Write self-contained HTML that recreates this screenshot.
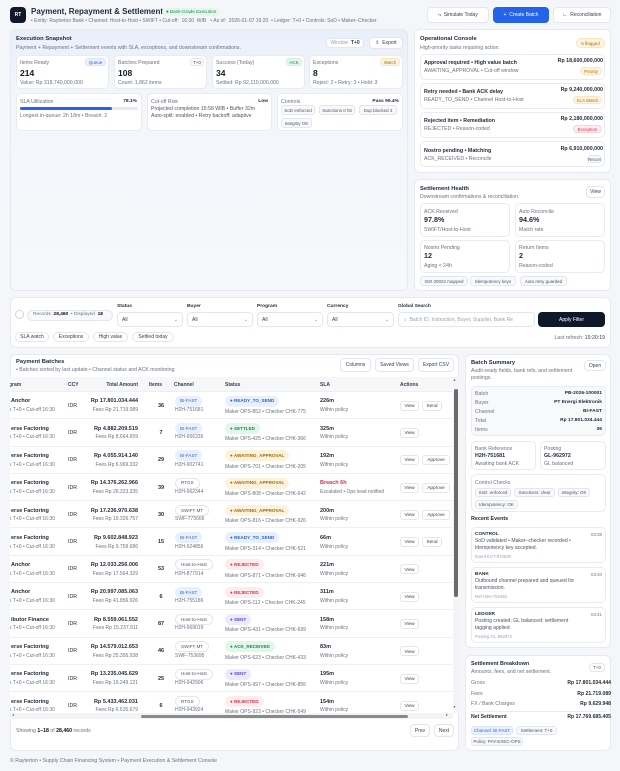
<!DOCTYPE html>
<html><head><meta charset="utf-8"><style>
*{box-sizing:border-box;margin:0;padding:0}
body{width:620px;height:771px;overflow:hidden;background:#f4f6f9;font-family:"Liberation Sans",sans-serif;color:#1f2937;position:relative;font-size:5.2px}
.a{position:absolute;white-space:nowrap;line-height:1.2}
.p{position:absolute;background:#fff;border:1px solid #e6e9ef;border-radius:6px}
.c{position:absolute;background:#fff;border:1px solid #e8ebf0;border-radius:5px}
.h{font-weight:bold;font-size:5.8px;color:#1e293b}
.s{color:#6b7280;font-size:5.2px}
.btn{position:absolute;background:#fff;border:1px solid #e3e6ec;border-radius:4px;font-size:5px;color:#374151;display:flex;align-items:center;justify-content:center}
.tag{position:absolute;border:1px solid #e3e6ec;background:#f8f9fb;border-radius:3px;font-size:4.5px;color:#4b5563;display:flex;align-items:center;justify-content:center;height:10px}
.v{font-weight:bold;font-size:8.5px;color:#111827}
.r{position:absolute;left:0;width:443px;height:27.3px;border-bottom:1px solid #eef0f3;background:#fff}
.pb{font-weight:bold;font-size:5.5px;color:#1f2937}
.ps{font-size:5px;color:#6b7280}
.ch{position:absolute;height:11px;border-radius:6px;font-size:4.6px;padding:0 5px;display:flex;align-items:center;white-space:nowrap}
.bf{background:#e9f0fd;color:#3b66c9}
.gy{background:#fff;border:1px solid #e3e6ec;color:#4b5563}
.st{position:absolute;height:11px;border-radius:6px;font-size:4.6px;padding:0 5px;display:flex;align-items:center;white-space:nowrap;font-weight:bold}
.rd{background:#e8f0fe;color:#2f5fd0}.se{background:#e3f6ec;color:#16894f}.aw{background:#fdf3dc;color:#a5690c}.rj{background:#fdecee;color:#d0344a}.sn{background:#eeeafd;color:#5b46d6}
.bt{position:absolute;height:10px;top:8.7px;background:#fff;border:1px solid #e3e6ec;border-radius:3px;font-size:4.7px;color:#374151;display:flex;align-items:center;justify-content:center}
</style></head><body>

<!-- header -->
<div class="a" style="left:10px;top:7px;width:16px;height:16px;background:#111827;border-radius:4px;color:#fff;font-size:5px;font-weight:bold;display:flex;align-items:center;justify-content:center">RT</div>
<div class="a" style="left:31px;top:6.5px;font-size:8px;font-weight:bold;color:#1e293b">Payment, Repayment &amp; Settlement</div>
<div class="a" style="left:162px;top:7.5px;height:8px;padding:0 4px;background:#e6f6ed;color:#16894f;border-radius:4px;font-size:4.6px;display:flex;align-items:center">● Bank-Grade Execution</div>
<div class="a s" style="left:31px;top:17.5px;font-size:5px">• Entity: Rayterton Bank • Channel: Host-to-Host • SWIFT • Cut-off: &nbsp;16:30 &nbsp;WIB &nbsp; • As of: &nbsp;2026-01-07 19:20 &nbsp;• Ledger: T+0 • Controls: SoD • Maker–Checker</div>
<div class="btn" style="left:427px;top:7px;width:62px;height:16px">⤷ &nbsp;Simulate Today</div>
<div class="btn" style="left:493px;top:7px;width:56px;height:16px;background:#2563eb;border-color:#2563eb;color:#fff">+ &nbsp;Create Batch</div>
<div class="btn" style="left:553px;top:7px;width:58px;height:16px">∟ &nbsp;Reconciliation</div>

<!-- exec snapshot -->
<div class="p" style="left:10px;top:29px;width:398px;height:262px;background:linear-gradient(180deg,#e9effa 0%,#f3f6fb 25%,#f6f8fb 100%)"></div>
<div class="a h" style="left:16px;top:36px">Execution Snapshot</div>
<div class="a s" style="left:16px;top:44.5px">Payment + Repayment + Settlement events with SLA, exceptions, and downstream confirmations.</div>
<div class="btn" style="left:326px;top:38px;width:38px;height:10px;color:#9ca3af">Window &nbsp;<b style="color:#374151">T+0</b></div>
<div class="btn" style="left:369px;top:37px;width:34px;height:12px">⇪ &nbsp;Export</div>

<div class="c" style="left:16px;top:55px;width:93px;height:34px"></div>
<div class="a s" style="left:20px;top:60px">Items Ready</div>
<div class="tag" style="left:85px;top:58px;width:21px;height:8px;background:#e9f0fd;color:#3b66c9;border-color:#dbe5fb">Queue</div>
<div class="a v" style="left:20px;top:68px">214</div>
<div class="a s" style="left:20px;top:79.5px">Value: Rp 318,740,000,000</div>

<div class="c" style="left:114px;top:55px;width:93px;height:34px"></div>
<div class="a s" style="left:118px;top:60px">Batches Prepared</div>
<div class="tag" style="left:190px;top:58px;width:14px;height:8px">T+0</div>
<div class="a v" style="left:118px;top:68px">108</div>
<div class="a s" style="left:118px;top:79.5px">Count: 1,862 items</div>

<div class="c" style="left:212px;top:55px;width:93px;height:34px"></div>
<div class="a s" style="left:216px;top:60px">Success (Today)</div>
<div class="tag" style="left:286px;top:58px;width:16px;height:8px;background:#e6f6ed;color:#16894f;border-color:#d2efdf">ACK</div>
<div class="a v" style="left:216px;top:68px">34</div>
<div class="a s" style="left:216px;top:79.5px">Settled: Rp 92,110,000,000</div>

<div class="c" style="left:309px;top:55px;width:94px;height:34px"></div>
<div class="a s" style="left:313px;top:60px">Exceptions</div>
<div class="tag" style="left:380px;top:58px;width:20px;height:8px;background:#fdf4de;color:#b07012;border-color:#f8e7bd">Watch</div>
<div class="a v" style="left:313px;top:68px">8</div>
<div class="a s" style="left:313px;top:79.5px">Reject: 2 • Retry: 3 • Hold: 3</div>

<div class="c" style="left:16px;top:93px;width:126px;height:38px"></div>
<div class="a s" style="left:20px;top:98.5px">SLA Utilization</div>
<div class="a" style="right:483px;top:98.5px;font-weight:bold;font-size:4.9px">78.1%</div>
<div class="a" style="left:20px;top:106.5px;width:118px;height:3.5px;background:#e5e9f0;border-radius:2px"><div style="width:78%;height:100%;background:#2563eb;border-radius:2px"></div></div>
<div class="a s" style="left:20px;top:112.5px">Longest in-queue: 2h 18m • Breach: 2</div>

<div class="c" style="left:147px;top:93px;width:125px;height:38px"></div>
<div class="a s" style="left:151px;top:98.5px">Cut-off Risk</div>
<div class="a" style="right:352px;top:98.5px;font-weight:bold;font-size:4.9px">Low</div>
<div class="a s" style="left:151px;top:106px;color:#4b5563">Projected completion 15:58 WIB • Buffer 32m</div>
<div class="a s" style="left:151px;top:113px;color:#4b5563">Auto-split: enabled • Retry backoff: adaptive</div>

<div class="c" style="left:277px;top:93px;width:126px;height:38px"></div>
<div class="a s" style="left:281px;top:98.5px">Controls</div>
<div class="a" style="right:221px;top:98.5px;font-weight:bold;font-size:4.9px">Pass 99.4%</div>
<div class="tag" style="left:281px;top:105px;width:34px">SoD enforced</div>
<div class="tag" style="left:319px;top:105px;width:36px">Sanctions 0 hit</div>
<div class="tag" style="left:359px;top:105px;width:38px">Dup blocked 4</div>
<div class="tag" style="left:281px;top:118px;width:31px">Integrity OK</div>

<!-- ops console -->
<div class="p" style="left:414px;top:29px;width:197px;height:144px"></div>
<div class="a h" style="left:420px;top:36px">Operational Console</div>
<div class="a s" style="left:420px;top:44.5px">High-priority tasks requiring action.</div>
<div class="tag" style="left:576px;top:38px;width:29px;height:10px;background:#fdf4de;color:#b07012;border-color:#f8e7bd;border-radius:5px">5 flagged</div>

<div class="c" style="left:420px;top:54px;width:185px;height:26px"></div>
<div class="a" style="left:424px;top:59.5px;font-weight:bold;font-size:5.3px">Approval required • High value batch</div>
<div class="a s" style="left:424px;top:68px">AWAITING_APPROVAL • Cut-off window</div>
<div class="a" style="right:17px;top:58px;font-weight:bold;font-size:5.3px">Rp 18,600,000,000</div>
<div class="tag" style="left:580px;top:67px;width:22px;height:8px;background:#fdf4de;color:#b07012;border-color:#f8e7bd;border-radius:4px">Priority</div>

<div class="c" style="left:420px;top:83px;width:185px;height:26px"></div>
<div class="a" style="left:424px;top:88.5px;font-weight:bold;font-size:5.3px">Retry needed • Bank ACK delay</div>
<div class="a s" style="left:424px;top:97px">READY_TO_SEND • Channel Host-to-Host</div>
<div class="a" style="right:17px;top:87px;font-weight:bold;font-size:5.3px">Rp 9,240,000,000</div>
<div class="tag" style="left:573px;top:96px;width:29px;height:8px;background:#fdf4de;color:#b07012;border-color:#f8e7bd;border-radius:4px">SLA Watch</div>

<div class="c" style="left:420px;top:112px;width:185px;height:26px"></div>
<div class="a" style="left:424px;top:117.5px;font-weight:bold;font-size:5.3px">Rejected item • Remediation</div>
<div class="a s" style="left:424px;top:126px">REJECTED • Reason-coded</div>
<div class="a" style="right:17px;top:116px;font-weight:bold;font-size:5.3px">Rp 2,180,000,000</div>
<div class="tag" style="left:573px;top:125px;width:29px;height:8px;background:#fdecee;color:#d0344a;border-color:#f8d6db;border-radius:4px">Exception</div>

<div class="c" style="left:420px;top:141px;width:185px;height:26px"></div>
<div class="a" style="left:424px;top:147.5px;font-weight:bold;font-size:5.3px">Nostro pending • Matching</div>
<div class="a s" style="left:424px;top:155.5px">ACK_RECEIVED • Reconcile</div>
<div class="a" style="right:17px;top:146px;font-weight:bold;font-size:5.3px">Rp 6,910,000,000</div>
<div class="tag" style="left:587px;top:155px;width:15px;height:8px;border-radius:4px">Recon</div>

<!-- settlement health -->
<div class="p" style="left:414px;top:179px;width:197px;height:112px"></div>
<div class="a h" style="left:420px;top:186px">Settlement Health</div>
<div class="a s" style="left:420px;top:194px">Downstream confirmations &amp; reconciliation.</div>
<div class="btn" style="left:586px;top:186px;width:19px;height:12px">View</div>
<div class="c" style="left:420px;top:203px;width:90px;height:34px"></div>
<div class="a s" style="left:424px;top:208.5px">ACK Received</div>
<div class="a" style="left:424px;top:215.5px;font-weight:bold;font-size:7.2px">97.8%</div>
<div class="a s" style="left:424px;top:226.5px">SWIFT/Host-to-Host</div>
<div class="c" style="left:515px;top:203px;width:90px;height:34px"></div>
<div class="a s" style="left:519px;top:208.5px">Auto Reconcile</div>
<div class="a" style="left:519px;top:215.5px;font-weight:bold;font-size:7.2px">94.6%</div>
<div class="a s" style="left:519px;top:226.5px">Match rate</div>
<div class="c" style="left:420px;top:240px;width:90px;height:33px"></div>
<div class="a s" style="left:424px;top:245px">Nostro Pending</div>
<div class="a" style="left:424px;top:252px;font-weight:bold;font-size:7.2px">12</div>
<div class="a s" style="left:424px;top:262.5px">Aging &lt; 24h</div>
<div class="c" style="left:515px;top:240px;width:90px;height:33px"></div>
<div class="a s" style="left:519px;top:245px">Return Items</div>
<div class="a" style="left:519px;top:252px;font-weight:bold;font-size:7.2px">2</div>
<div class="a s" style="left:519px;top:262.5px">Reason-coded</div>
<div class="tag" style="left:420px;top:276px;width:48px">ISO 20022 mapped</div>
<div class="tag" style="left:470px;top:276px;width:46px">Idempotency keys</div>
<div class="tag" style="left:520px;top:276px;width:47px">Auto retry guarded</div>

<!-- filter -->
<div class="p" style="left:10px;top:297px;width:601px;height:51px"></div>
<div class="a" style="left:15px;top:310px;width:9px;height:9px;border:1px solid #d1d5db;border-radius:50%;background:#fff"></div>
<div class="a" style="left:27px;top:309.5px;width:86px;height:11px;border:1px solid #e3e6ec;border-radius:6px;background:#f8f9fb;font-size:4.8px;color:#6b7280;display:flex;align-items:center;padding-left:5px">Records &nbsp;<b style="color:#111">28,460</b>&nbsp; • Displayed &nbsp;<b style="color:#111">18</b></div>
<div class="a" style="left:117px;top:303.5px;font-weight:bold;font-size:4.9px">Status</div>
<div class="a" style="left:187px;top:303.5px;font-weight:bold;font-size:4.9px">Buyer</div>
<div class="a" style="left:257px;top:303.5px;font-weight:bold;font-size:4.9px">Program</div>
<div class="a" style="left:327px;top:303.5px;font-weight:bold;font-size:4.9px">Currency</div>
<div class="a" style="left:398px;top:303.5px;font-weight:bold;font-size:4.9px">Global Search</div>
<div class="btn" style="left:117px;top:312px;width:66px;height:15px;justify-content:space-between;padding:0 4px"><span>All</span><span style="color:#888">⌄</span></div>
<div class="btn" style="left:187px;top:312px;width:66px;height:15px;justify-content:space-between;padding:0 4px"><span>All</span><span style="color:#888">⌄</span></div>
<div class="btn" style="left:257px;top:312px;width:66px;height:15px;justify-content:space-between;padding:0 4px"><span>All</span><span style="color:#888">⌄</span></div>
<div class="btn" style="left:327px;top:312px;width:67px;height:15px;justify-content:space-between;padding:0 4px"><span>All</span><span style="color:#888">⌄</span></div>
<div class="btn" style="left:398px;top:312px;width:137px;height:15px;justify-content:flex-start;padding:0 5px;color:#9ca3af;overflow:hidden">⌕ &nbsp;Batch ID, Instruction, Buyer, Supplier, Bank Re</div>
<div class="btn" style="left:538px;top:312px;width:67px;height:15px;background:#0f172a;border-color:#0f172a;color:#fff">Apply Filter</div>
<div class="btn" style="left:15px;top:332px;width:34px;height:10px;border-radius:5px">SLA watch</div>
<div class="btn" style="left:53px;top:332px;width:36px;height:10px;border-radius:5px">Exceptions</div>
<div class="btn" style="left:93px;top:332px;width:35px;height:10px;border-radius:5px">High value</div>
<div class="btn" style="left:132px;top:332px;width:42px;height:10px;border-radius:5px">Settled today</div>
<div class="a s" style="right:15px;top:334.5px">Last refresh: <span style="color:#374151">19:20:19</span></div>

<!-- payment batches -->
<div class="p" style="left:10px;top:354px;width:449px;height:397px"></div>
<div class="a h" style="left:16px;top:359px">Payment Batches</div>
<div class="a s" style="left:16px;top:366.5px">• Batches sorted by last update • Channel status and ACK monitoring</div>
<div class="btn" style="left:340px;top:358px;width:31px;height:14px">Columns</div>
<div class="btn" style="left:375px;top:358px;width:39px;height:14px">Saved Views</div>
<div class="btn" style="left:418px;top:358px;width:36px;height:14px">Export CSV</div>

<div class="a" style="left:10px;top:377px;width:449px;height:336px;overflow:hidden">
<div class="a" style="left:0;top:0;width:443px;height:15px;background:#f6f7f9;border-bottom:1px solid #eceef2"></div>
<div class="a" style="left:-1px;top:4.5px;font-weight:bold;font-size:5px;color:#374151">gram</div>
<div class="a" style="left:58px;top:4.5px;font-weight:bold;font-size:5px;color:#374151">CCY</div>
<div class="a" style="right:321px;top:4.5px;font-weight:bold;font-size:5px;color:#374151">Total Amount</div>
<div class="a" style="left:139px;top:4.5px;font-weight:bold;font-size:5px;color:#374151">Items</div>
<div class="a" style="left:164px;top:4.5px;font-weight:bold;font-size:5px;color:#374151">Channel</div>
<div class="a" style="left:215px;top:4.5px;font-weight:bold;font-size:5px;color:#374151">Status</div>
<div class="a" style="left:310px;top:4.5px;font-weight:bold;font-size:5px;color:#374151">SLA</div>
<div class="a" style="left:390px;top:4.5px;font-weight:bold;font-size:5px;color:#374151">Actions</div>

<div class="r" style="top:15px"><div class="a pb" style="left:1px;top:6.4px">Anchor</div><div class="a ps" style="left:-1px;top:15px">s T+0 • Cut-off 16:30</div><div class="a" style="left:58px;top:10.7px">IDR</div><div class="a pb" style="right:315px;top:6.4px">Rp 17.801.034.444</div><div class="a ps" style="right:315px;top:15px">Fees Rp 21.719.089</div><div class="a pb" style="left:146px;width:10px;text-align:center;top:10.7px">36</div><span class="ch bf" style="left:165px;top:3.7px">BI-FAST</span><div class="a ps" style="left:165px;top:15px">H2H-751681</div><span class="st rd" style="left:215px;top:3.7px">● READY_TO_SEND</span><div class="a ps" style="left:215px;top:17px">Maker OPS-852 • Checker CHK-775</div><div class="a pb" style="left:310px;top:6.4px">226m</div><div class="a ps" style="left:310px;top:15px">Within policy</div><span class="bt" style="left:390px;width:19px">View</span><span class="bt" style="left:412px;width:20px">Send</span></div>

<div class="r" style="top:42.3px"><div class="a pb" style="left:1px;top:6.4px">erse Factoring</div><div class="a ps" style="left:-1px;top:15px">s T+0 • Cut-off 16:30</div><div class="a" style="left:58px;top:10.7px">IDR</div><div class="a pb" style="right:315px;top:6.4px">Rp 4.882.209.519</div><div class="a ps" style="right:315px;top:15px">Fees Rp 8.664.659</div><div class="a pb" style="left:146px;width:10px;text-align:center;top:10.7px">7</div><span class="ch bf" style="left:165px;top:3.7px">BI-FAST</span><div class="a ps" style="left:165px;top:15px">H2H-956336</div><span class="st se" style="left:215px;top:3.7px">● SETTLED</span><div class="a ps" style="left:215px;top:17px">Maker OPS-425 • Checker CHK-366</div><div class="a pb" style="left:310px;top:6.4px">325m</div><div class="a ps" style="left:310px;top:15px">Within policy</div><span class="bt" style="left:390px;width:19px">View</span></div>

<div class="r" style="top:69.6px"><div class="a pb" style="left:1px;top:6.4px">erse Factoring</div><div class="a ps" style="left:-1px;top:15px">s T+0 • Cut-off 16:30</div><div class="a" style="left:58px;top:10.7px">IDR</div><div class="a pb" style="right:315px;top:6.4px">Rp 4.055.914.140</div><div class="a ps" style="right:315px;top:15px">Fees Rp 6.969.332</div><div class="a pb" style="left:146px;width:10px;text-align:center;top:10.7px">29</div><span class="ch bf" style="left:165px;top:3.7px">BI-FAST</span><div class="a ps" style="left:165px;top:15px">H2H-902741</div><span class="st aw" style="left:215px;top:3.7px">● AWAITING_APPROVAL</span><div class="a ps" style="left:215px;top:17px">Maker OPS-701 • Checker CHK-205</div><div class="a pb" style="left:310px;top:6.4px">192m</div><div class="a ps" style="left:310px;top:15px">Within policy</div><span class="bt" style="left:390px;width:19px">View</span><span class="bt" style="left:412px;width:28px">Approve</span></div>

<div class="r" style="top:96.9px"><div class="a pb" style="left:1px;top:6.4px">erse Factoring</div><div class="a ps" style="left:-1px;top:15px">s T+0 • Cut-off 16:30</div><div class="a" style="left:58px;top:10.7px">IDR</div><div class="a pb" style="right:315px;top:6.4px">Rp 14.376.262.966</div><div class="a ps" style="right:315px;top:15px">Fees Rp 26.323.335</div><div class="a pb" style="left:146px;width:10px;text-align:center;top:10.7px">39</div><span class="ch gy" style="left:165px;top:3.7px">RTGS</span><div class="a ps" style="left:165px;top:15px">H2H-962344</div><span class="st aw" style="left:215px;top:3.7px">● AWAITING_APPROVAL</span><div class="a ps" style="left:215px;top:17px">Maker OPS-808 • Checker CHK-642</div><div class="a pb" style="left:310px;top:6.4px;color:#d0344a">Breach 6h</div><div class="a ps" style="left:310px;top:15px">Escalated • Ops lead notified</div><span class="bt" style="left:390px;width:19px">View</span><span class="bt" style="left:412px;width:28px">Approve</span></div>

<div class="r" style="top:124.2px"><div class="a pb" style="left:1px;top:6.4px">erse Factoring</div><div class="a ps" style="left:-1px;top:15px">s T+0 • Cut-off 16:30</div><div class="a" style="left:58px;top:10.7px">IDR</div><div class="a pb" style="right:315px;top:6.4px">Rp 17.236.970.638</div><div class="a ps" style="right:315px;top:15px">Fees Rp 19.326.757</div><div class="a pb" style="left:146px;width:10px;text-align:center;top:10.7px">30</div><span class="ch gy" style="left:165px;top:3.7px">SWIFT MT</span><div class="a ps" style="left:165px;top:15px">SWF-775666</div><span class="st aw" style="left:215px;top:3.7px">● AWAITING_APPROVAL</span><div class="a ps" style="left:215px;top:17px">Maker OPS-816 • Checker CHK-926</div><div class="a pb" style="left:310px;top:6.4px">200m</div><div class="a ps" style="left:310px;top:15px">Within policy</div><span class="bt" style="left:390px;width:19px">View</span><span class="bt" style="left:412px;width:28px">Approve</span></div>

<div class="r" style="top:151.5px"><div class="a pb" style="left:1px;top:6.4px">erse Factoring</div><div class="a ps" style="left:-1px;top:15px">s T+0 • Cut-off 16:30</div><div class="a" style="left:58px;top:10.7px">IDR</div><div class="a pb" style="right:315px;top:6.4px">Rp 9.602.848.923</div><div class="a ps" style="right:315px;top:15px">Fees Rp 9.759.686</div><div class="a pb" style="left:146px;width:10px;text-align:center;top:10.7px">15</div><span class="ch bf" style="left:165px;top:3.7px">BI-FAST</span><div class="a ps" style="left:165px;top:15px">H2H-924856</div><span class="st rd" style="left:215px;top:3.7px">● READY_TO_SEND</span><div class="a ps" style="left:215px;top:17px">Maker OPS-314 • Checker CHK-521</div><div class="a pb" style="left:310px;top:6.4px">66m</div><div class="a ps" style="left:310px;top:15px">Within policy</div><span class="bt" style="left:390px;width:19px">View</span><span class="bt" style="left:412px;width:20px">Send</span></div>

<div class="r" style="top:178.8px"><div class="a pb" style="left:1px;top:6.4px">Anchor</div><div class="a ps" style="left:-1px;top:15px">s T+0 • Cut-off 16:30</div><div class="a" style="left:58px;top:10.7px">IDR</div><div class="a pb" style="right:315px;top:6.4px">Rp 12.033.256.006</div><div class="a ps" style="right:315px;top:15px">Fees Rp 17.564.329</div><div class="a pb" style="left:146px;width:10px;text-align:center;top:10.7px">53</div><span class="ch gy" style="left:165px;top:3.7px">Host-to-Host</span><div class="a ps" style="left:165px;top:15px">H2H-877914</div><span class="st rj" style="left:215px;top:3.7px">● REJECTED</span><div class="a ps" style="left:215px;top:17px">Maker OPS-871 • Checker CHK-946</div><div class="a pb" style="left:310px;top:6.4px">221m</div><div class="a ps" style="left:310px;top:15px">Within policy</div><span class="bt" style="left:390px;width:19px">View</span></div>

<div class="r" style="top:206.1px"><div class="a pb" style="left:1px;top:6.4px">Anchor</div><div class="a ps" style="left:-1px;top:15px">s T+0 • Cut-off 16:30</div><div class="a" style="left:58px;top:10.7px">IDR</div><div class="a pb" style="right:315px;top:6.4px">Rp 20.997.085.063</div><div class="a ps" style="right:315px;top:15px">Fees Rp 41.856.926</div><div class="a pb" style="left:146px;width:10px;text-align:center;top:10.7px">6</div><span class="ch bf" style="left:165px;top:3.7px">BI-FAST</span><div class="a ps" style="left:165px;top:15px">H2H-755186</div><span class="st rj" style="left:215px;top:3.7px">● REJECTED</span><div class="a ps" style="left:215px;top:17px">Maker OPS-112 • Checker CHK-245</div><div class="a pb" style="left:310px;top:6.4px">311m</div><div class="a ps" style="left:310px;top:15px">Within policy</div><span class="bt" style="left:390px;width:19px">View</span></div>

<div class="r" style="top:233.4px"><div class="a pb" style="left:1px;top:6.4px">ibutor Finance</div><div class="a ps" style="left:-1px;top:15px">s T+0 • Cut-off 16:30</div><div class="a" style="left:58px;top:10.7px">IDR</div><div class="a pb" style="right:315px;top:6.4px">Rp 8.559.061.552</div><div class="a ps" style="right:315px;top:15px">Fees Rp 15.237.911</div><div class="a pb" style="left:146px;width:10px;text-align:center;top:10.7px">87</div><span class="ch gy" style="left:165px;top:3.7px">Host-to-Host</span><div class="a ps" style="left:165px;top:15px">H2H-969019</div><span class="st sn" style="left:215px;top:3.7px">● SENT</span><div class="a ps" style="left:215px;top:17px">Maker OPS-431 • Checker CHK-699</div><div class="a pb" style="left:310px;top:6.4px">158m</div><div class="a ps" style="left:310px;top:15px">Within policy</div><span class="bt" style="left:390px;width:19px">View</span></div>

<div class="r" style="top:260.7px"><div class="a pb" style="left:1px;top:6.4px">erse Factoring</div><div class="a ps" style="left:-1px;top:15px">s T+0 • Cut-off 16:30</div><div class="a" style="left:58px;top:10.7px">IDR</div><div class="a pb" style="right:315px;top:6.4px">Rp 14.579.012.653</div><div class="a ps" style="right:315px;top:15px">Fees Rp 25.395.938</div><div class="a pb" style="left:146px;width:10px;text-align:center;top:10.7px">46</div><span class="ch gy" style="left:165px;top:3.7px">SWIFT MT</span><div class="a ps" style="left:165px;top:15px">SWF-753695</div><span class="st se" style="left:215px;top:3.7px">● ACK_RECEIVED</span><div class="a ps" style="left:215px;top:17px">Maker OPS-623 • Checker CHK-433</div><div class="a pb" style="left:310px;top:6.4px">83m</div><div class="a ps" style="left:310px;top:15px">Within policy</div><span class="bt" style="left:390px;width:19px">View</span></div>

<div class="r" style="top:288px"><div class="a pb" style="left:1px;top:6.4px">erse Factoring</div><div class="a ps" style="left:-1px;top:15px">s T+0 • Cut-off 16:30</div><div class="a" style="left:58px;top:10.7px">IDR</div><div class="a pb" style="right:315px;top:6.4px">Rp 13.235.045.629</div><div class="a ps" style="right:315px;top:15px">Fees Rp 19.249.121</div><div class="a pb" style="left:146px;width:10px;text-align:center;top:10.7px">25</div><span class="ch gy" style="left:165px;top:3.7px">Host-to-Host</span><div class="a ps" style="left:165px;top:15px">H2H-942906</div><span class="st sn" style="left:215px;top:3.7px">● SENT</span><div class="a ps" style="left:215px;top:17px">Maker OPS-997 • Checker CHK-855</div><div class="a pb" style="left:310px;top:6.4px">195m</div><div class="a ps" style="left:310px;top:15px">Within policy</div><span class="bt" style="left:390px;width:19px">View</span></div>

<div class="r" style="top:315.3px"><div class="a pb" style="left:1px;top:6.4px">erse Factoring</div><div class="a ps" style="left:-1px;top:15px">s T+0 • Cut-off 16:30</div><div class="a" style="left:58px;top:10.7px">IDR</div><div class="a pb" style="right:315px;top:6.4px">Rp 5.433.462.031</div><div class="a ps" style="right:315px;top:15px">Fees Rp 6.635.679</div><div class="a pb" style="left:146px;width:10px;text-align:center;top:10.7px">6</div><span class="ch gy" style="left:165px;top:3.7px">RTGS</span><div class="a ps" style="left:165px;top:15px">H2H-943924</div><span class="st rj" style="left:215px;top:3.7px">● REJECTED</span><div class="a ps" style="left:215px;top:17px">Maker OPS-923 • Checker CHK-549</div><div class="a pb" style="left:310px;top:6.4px">154m</div><div class="a ps" style="left:310px;top:15px">Within policy</div><span class="bt" style="left:390px;width:19px">View</span></div>

<div class="a" style="left:443px;top:0;width:6px;height:336px;background:#f3f4f6"></div>
<div class="a" style="left:444px;top:12px;width:3.5px;height:208px;background:#6b6b6b;border-radius:2px"></div>
<div class="a" style="left:443.5px;top:1px;font-size:4px;color:#666">▴</div>
<div class="a" style="left:443.5px;top:328px;font-size:4px;color:#666">▾</div>
</div>
<div class="a" style="left:10px;top:713px;width:443px;height:6px;background:#f3f4f6"></div>
<div class="a" style="left:141px;top:714.5px;width:267px;height:3.5px;background:#8a8a8a;border-radius:2px"></div>
<div class="a" style="left:12px;top:713px;font-size:4px;color:#666">◂</div>
<div class="a" style="left:446px;top:713px;font-size:4px;color:#666">▸</div>
<div class="a s" style="left:16px;top:727.5px">Showing <b style="color:#111">1–18</b> of <b style="color:#111">28,460</b> records</div>
<div class="btn" style="left:410px;top:724px;width:20px;height:13px">Prev</div>
<div class="btn" style="left:434px;top:724px;width:20px;height:13px">Next</div>

<!-- batch summary -->
<div class="p" style="left:465px;top:354px;width:146px;height:294px"></div>
<div class="a h" style="left:471px;top:360px">Batch Summary</div>
<div class="a s" style="left:471px;top:368px;line-height:1.4">Audit-ready fields, bank refs, and settlement<br>postings.</div>
<div class="btn" style="left:584px;top:360px;width:22px;height:11px">Open</div>
<div class="a" style="left:471px;top:386px;width:135px;height:50px;background:#f8f9fb;border:1px solid #e8ebf0;border-radius:5px"></div>
<div class="a s" style="left:475px;top:390.5px">Batch</div><div class="a" style="right:18px;top:390.5px;font-weight:bold;font-size:4.9px">PB-2026-100001</div>
<div class="a s" style="left:475px;top:399.5px">Buyer</div><div class="a" style="right:18px;top:399.5px;font-weight:bold;font-size:4.9px">PT Energi Elektronik</div>
<div class="a s" style="left:475px;top:408.5px">Channel</div><div class="a" style="right:18px;top:408.5px;font-weight:bold;font-size:4.9px">BI-FAST</div>
<div class="a s" style="left:475px;top:417.5px">Total</div><div class="a" style="right:18px;top:417.5px;font-weight:bold;font-size:4.9px">Rp 17.801.034.444</div>
<div class="a s" style="left:475px;top:426.5px">Items</div><div class="a" style="right:18px;top:426.5px;font-weight:bold;font-size:4.9px">36</div>
<div class="c" style="left:471px;top:441px;width:65px;height:29px"></div>
<div class="a s" style="left:475px;top:445.5px">Bank Reference</div>
<div class="a" style="left:475px;top:452.5px;font-weight:bold;font-size:5.3px">H2H-751681</div>
<div class="a s" style="left:475px;top:460.5px">Awaiting bank ACK</div>
<div class="c" style="left:540px;top:441px;width:66px;height:29px"></div>
<div class="a s" style="left:544px;top:445.5px">Posting</div>
<div class="a" style="left:544px;top:452.5px;font-weight:bold;font-size:5.3px">GL-962972</div>
<div class="a s" style="left:544px;top:460.5px">GL balanced</div>
<div class="c" style="left:471px;top:474px;width:135px;height:38px"></div>
<div class="a s" style="left:475px;top:479.5px">Control Checks</div>
<div class="tag" style="left:475px;top:487.5px;width:36px;height:9px">SoD: enforced</div>
<div class="tag" style="left:514px;top:487.5px;width:41px;height:9px">Sanctions: clear</div>
<div class="tag" style="left:558px;top:487.5px;width:32px;height:9px">Integrity: OK</div>
<div class="tag" style="left:475px;top:499.5px;width:43px;height:9px">Idempotency: OK</div>
<div class="a h" style="left:471px;top:516px;font-size:5.4px">Recent Events</div>

<div class="c" style="left:471px;top:527px;width:135px;height:36px"></div>
<div class="a" style="left:475px;top:531.5px;font-weight:bold;font-size:4.8px">CONTROL</div>
<div class="a s" style="right:18px;top:531.5px;font-size:4.4px">03:39</div>
<div class="a" style="left:475px;top:538px;font-size:5.1px;color:#4b5563;line-height:1.4">SoD validated • Maker–checker recorded •<br>Idempotency key accepted.</div>
<div class="a s" style="left:475px;top:553.5px;font-size:4.3px;color:#9ca3af">Event EVT-972630</div>

<div class="c" style="left:471px;top:567px;width:135px;height:36px"></div>
<div class="a" style="left:475px;top:571.5px;font-weight:bold;font-size:4.8px">BANK</div>
<div class="a s" style="right:18px;top:571.5px;font-size:4.4px">03:40</div>
<div class="a" style="left:475px;top:578px;font-size:5.1px;color:#4b5563;line-height:1.4">Outbound channel prepared and queued for<br>transmission.</div>
<div class="a s" style="left:475px;top:593.5px;font-size:4.3px;color:#9ca3af">Ref H2H-751681</div>

<div class="c" style="left:471px;top:607px;width:135px;height:36px"></div>
<div class="a" style="left:475px;top:611.5px;font-weight:bold;font-size:4.8px">LEDGER</div>
<div class="a s" style="right:18px;top:611.5px;font-size:4.4px">03:41</div>
<div class="a" style="left:475px;top:618px;font-size:5.1px;color:#4b5563;line-height:1.4">Posting created; GL balanced; settlement<br>tagging applied.</div>
<div class="a s" style="left:475px;top:633.5px;font-size:4.3px;color:#9ca3af">Posting GL-962972</div>

<!-- settlement breakdown -->
<div class="p" style="left:465px;top:655px;width:146px;height:96px"></div>
<div class="a h" style="left:471px;top:661px;font-size:5.4px">Settlement Breakdown</div>
<div class="a s" style="left:471px;top:668.5px">Amounts, fees, and net settlement.</div>
<div class="tag" style="left:589px;top:663px;width:16px;height:9px;background:#fff;border-radius:4px">T+0</div>
<div class="a s" style="left:471px;top:679.5px">Gross</div><div class="a" style="right:9px;top:679.5px;font-weight:bold;font-size:5.1px">Rp 17.801.034.444</div>
<div class="a s" style="left:471px;top:690.5px">Fees</div><div class="a" style="right:9px;top:690.5px;font-weight:bold;font-size:5.1px">Rp 21.719.089</div>
<div class="a s" style="left:471px;top:700.5px">FX / Bank Charges</div><div class="a" style="right:9px;top:700.5px;font-weight:bold;font-size:5.1px">Rp 9.629.948</div>
<div class="a" style="left:471px;top:710.5px;width:135px;height:1px;background:#e8ebf0"></div>
<div class="a" style="left:471px;top:714px;font-weight:bold;font-size:5.1px">Net Settlement</div><div class="a" style="right:9px;top:714px;font-weight:bold;font-size:5.1px">Rp 17.769.685.405</div>
<div class="tag" style="left:471px;top:725.5px;width:42px;height:9px;background:#e9f0fd;color:#3b66c9;border-color:#dbe5fb">Channel: BI-FAST</div>
<div class="tag" style="left:516px;top:725.5px;width:41px;height:9px">Settlement: T+0</div>
<div class="tag" style="left:471px;top:737px;width:52px;height:9px">Policy: PAY-EXEC-OPS</div>

<div class="a s" style="left:10px;top:757.5px">© Rayterton • Supply Chain Financing System • Payment Execution &amp; Settlement Console</div>
</body></html>
